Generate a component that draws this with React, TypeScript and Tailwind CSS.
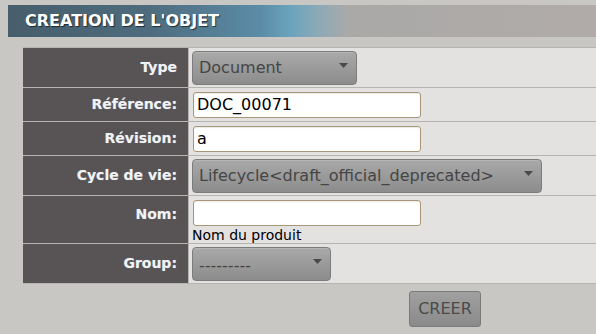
import React from "react";

const Arrow = () => (
  <svg width="9" height="5" viewBox="0 0 9 5" className="absolute right-[8px] top-[11px]">
    <polygon points="0,0 9,0 4.5,5" fill="#4a4a4a" />
  </svg>
);

const Select = ({ w, text, dashed }: { w: string; text: string; dashed?: boolean }) => (
  <div
    className={`relative h-[34px] ${w} rounded-[4px] border border-[#7c7c7c] bg-[linear-gradient(to_bottom,#a9a9a9,#8c8c8c)] shadow-[inset_0_1px_0_rgba(255,255,255,0.15)] flex items-center pl-[6px] text-[16px] text-[#454545] ${dashed ? "pt-[4px]" : ""}`}
  >
    <span className="leading-none">{text}</span>
    <Arrow />
  </div>
);

const Input = ({ value }: { value: string }) => (
  <div className="h-[26px] w-[228px] ml-[1px] rounded-[3px] border border-[#a89677] bg-white flex items-center pl-[3px] text-[16px] text-black shadow-[inset_0_1px_1px_rgba(0,0,0,0.08)]">
    <span className="leading-none">{value}</span>
  </div>
);

const Row = ({
  label,
  h,
  top,
  children,
}: {
  label: string;
  h: string;
  top?: boolean;
  children: React.ReactNode;
}) => (
  <div className={`flex ${h} border-b border-[#b6b4b1]`}>
    <div
      className={`w-[166px] shrink-0 bg-[#585354] border-r border-[#b6b4b1] flex justify-end pr-[11px] text-[14px] font-bold text-[#f2f2f2] [text-shadow:0_0_1px_rgba(160,200,230,0.6)] ${
        top ? "items-start pt-[8px]" : "items-center"
      }`}
    >
      {label}
    </div>
    <div className={`flex-1 bg-[#e3e2e0] pl-[3px] flex ${top ? "flex-col items-start pt-[3px]" : "items-center"}`}>
      {children}
    </div>
  </div>
);

export default function App() {
  return (
    <div className="w-[596px] h-[334px] overflow-hidden bg-[#c8c7c4] pt-[5px] font-['DejaVu_Sans',sans-serif]">
      <div className="ml-[8px] h-[32px] flex items-center pl-[17px] bg-[linear-gradient(to_right,#475d6b_0%,#4e6c7e_24%,#5b8ca7_43%,#6aa3bd_48%,#8eaab6_53%,#aaa9a8_58%,#b0aba8_100%)]">
        <span className="text-[16px] font-bold text-white [text-shadow:1px_1px_1px_rgba(0,0,0,0.6)] leading-none">
          CREATION DE L'OBJET
        </span>
      </div>
      <div className="ml-[23px] mt-[10px] w-[700px] border-t border-[#b6b4b1]">
        <Row label="Type" h="h-[40px]">
          <Select w="w-[165px]" text="Document" />
        </Row>
        <Row label="Référence:" h="h-[34px]">
          <Input value="DOC_00071" />
        </Row>
        <Row label="Révision:" h="h-[34px]">
          <Input value="a" />
        </Row>
        <Row label="Cycle de vie:" h="h-[40px]">
          <Select w="w-[350px]" text="Lifecycle<draft_official_deprecated>" />
        </Row>
        <Row label="Nom:" h="h-[48px]" top>
          <div className="mt-[1px]">
            <Input value="" />
          </div>
          <span className="text-[14px] text-black leading-[16px] mt-[1px]">Nom du produit</span>
        </Row>
        <Row label="Group:" h="h-[40px]">
          <Select w="w-[139px]" text="---------" dashed />
        </Row>
      </div>
      <div className="ml-[409px] mt-[7px]">
        <button className="w-[72px] h-[36px] rounded-[3px] border border-[#7a7a7a] bg-[linear-gradient(to_bottom,#a0a0a0,#8a8a8a)] text-[16px] text-[#4a4a4a]">
          CREER
        </button>
      </div>
    </div>
  );
}
